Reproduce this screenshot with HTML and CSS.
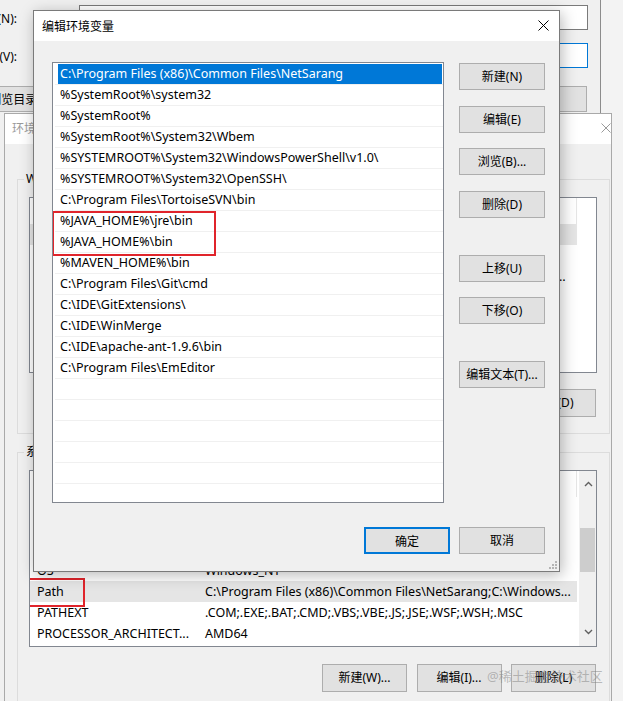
FILE: index.html
```html
<!DOCTYPE html>
<html lang="zh-CN">
<head>
<meta charset="utf-8">
<title>编辑环境变量</title>
<link rel="stylesheet" href="styles.css">
</head>
<body>
<div class="desktop">

  <!-- 编辑系统变量 -->
  <section class="win win-var">
    <div class="var-form">
      <label class="var-label">变量名(N):</label>
      <div class="textbox"></div>
      <label class="var-label">变量值(V):</label>
      <div class="textbox focus"></div>
      <div class="var-actions">
        <div class="btn-group">
          <button class="btn">浏览目录(D)...</button>
          <button class="btn">浏览文件(F)...</button>
        </div>
        <div class="btn-group">
          <button class="btn">确定</button>
          <button class="btn">取消</button>
        </div>
      </div>
    </div>
  </section>

  <!-- 环境变量 -->
  <section class="win win-env">
    <header class="tbar tbar-env">
      <span>环境变量</span>
      <svg class="x-icon" width="10" height="10" viewBox="0 0 10 10"><path d="M0.5 0.5L9.5 9.5M9.5 0.5L0.5 9.5" stroke="#9a9a9a" stroke-width="1"/></svg>
    </header>
    <div class="env-body">
      <fieldset class="group">
        <legend>Windows 的用户变量(U)</legend>
        <div class="lv lv-user">
          <div class="lv-main">
            <div class="lv-head"><span class="c-name">变量</span><span class="c-val">值</span></div>
            <div class="lv-row sel"><span class="c-name">IntelliJ IDEA</span><span class="c-val">D:\IDEA\bin;</span></div>
            <div class="lv-row"><span class="c-name">OneDrive</span><span class="c-val">C:\Users\Admin\OneDrive</span></div>
            <div class="lv-row"><span class="c-name">Path</span><span class="c-val ell">C:\Users\Admin\AppData\Local\Microsoft\WindowsApps;D:\IDEA\bin;C:\Users\Admin\AppData\Local\Programs</span></div>
            <div class="lv-row"><span class="c-name">TEMP</span><span class="c-val">%USERPROFILE%\AppData\Local\Temp</span></div>
            <div class="lv-row"><span class="c-name">TMP</span><span class="c-val">%USERPROFILE%\AppData\Local\Temp</span></div>
          </div>
        </div>
        <div class="group-actions">
          <button class="btn">新建(N)...</button>
          <button class="btn">编辑(E)...</button>
          <button class="btn">删除(D)</button>
        </div>
      </fieldset>

      <fieldset class="group group-sys">
        <legend>系统变量(S)</legend>
        <div class="lv lv-sys">
          <div class="lv-main">
            <div class="lv-head"><span class="c-name">变量</span><span class="c-val">值</span></div>
            <div class="lv-row"><span class="c-name">JAVA_HOME</span><span class="c-val">C:\Program Files\Java\jdk1.8.0_201</span></div>
            <div class="lv-row"><span class="c-name">MAVEN_HOME</span><span class="c-val">C:\IDE\apache-maven-3.6.0</span></div>
            <div class="lv-row"><span class="c-name">NUMBER_OF_PROCESSORS</span><span class="c-val">8</span></div>
            <div class="lv-row"><span class="c-name">OS</span><span class="c-val">Windows_NT</span></div>
            <div class="lv-row sel path-row"><span class="c-name">Path</span><span class="c-val">C:\Program Files (x86)\Common Files\NetSarang;C:\Windows...</span></div>
            <div class="lv-row"><span class="c-name">PATHEXT</span><span class="c-val">.COM;.EXE;.BAT;.CMD;.VBS;.VBE;.JS;.JSE;.WSF;.WSH;.MSC</span></div>
            <div class="lv-row"><span class="c-name">PROCESSOR_ARCHITECT...</span><span class="c-val">AMD64</span></div>
          </div>
          <div class="vscroll">
            <div class="sb-btn sb-up"><svg width="9" height="6" viewBox="0 0 9 6"><path d="M1 5L4.5 1.5L8 5" fill="none" stroke="#606060" stroke-width="1.4"/></svg></div>
            <div class="sb-track"><div class="sb-thumb"></div></div>
            <div class="sb-btn sb-down"><svg width="9" height="6" viewBox="0 0 9 6"><path d="M1 1L4.5 4.5L8 1" fill="none" stroke="#606060" stroke-width="1.4"/></svg></div>
          </div>
        </div>
        <div class="group-actions">
          <button class="btn">新建(W)...</button>
          <button class="btn">编辑(I)...</button>
          <button class="btn">删除(L)</button>
        </div>
      </fieldset>
    </div>
  </section>

  <!-- 编辑环境变量 -->
  <section class="win win-edit">
    <header class="tbar">
      <span>编辑环境变量</span>
      <svg class="x-icon" width="11" height="11" viewBox="0 0 11 11"><path d="M0.5 0.5L10.5 10.5M10.5 0.5L0.5 10.5" stroke="#000" stroke-width="1"/></svg>
    </header>
    <div class="edit-body">
      <div class="pathlist">
        <div class="pl-row sel"><span class="pl-cell">C:\Program Files (x86)\Common Files\NetSarang</span></div>
        <div class="pl-row"><span class="pl-cell">%SystemRoot%\system32</span></div>
        <div class="pl-row"><span class="pl-cell">%SystemRoot%</span></div>
        <div class="pl-row"><span class="pl-cell">%SystemRoot%\System32\Wbem</span></div>
        <div class="pl-row"><span class="pl-cell">%SYSTEMROOT%\System32\WindowsPowerShell\v1.0\</span></div>
        <div class="pl-row"><span class="pl-cell">%SYSTEMROOT%\System32\OpenSSH\</span></div>
        <div class="pl-row"><span class="pl-cell">C:\Program Files\TortoiseSVN\bin</span></div>
        <div class="mark">
          <div class="pl-row"><span class="pl-cell">%JAVA_HOME%\jre\bin</span></div>
          <div class="pl-row"><span class="pl-cell">%JAVA_HOME%\bin</span></div>
        </div>
        <div class="pl-row"><span class="pl-cell">%MAVEN_HOME%\bin</span></div>
        <div class="pl-row"><span class="pl-cell">C:\Program Files\Git\cmd</span></div>
        <div class="pl-row"><span class="pl-cell">C:\IDE\GitExtensions\</span></div>
        <div class="pl-row"><span class="pl-cell">C:\IDE\WinMerge</span></div>
        <div class="pl-row"><span class="pl-cell">C:\IDE\apache-ant-1.9.6\bin</span></div>
        <div class="pl-row"><span class="pl-cell">C:\Program Files\EmEditor</span></div>
        <div class="pl-row"><span class="pl-cell"></span></div>
        <div class="pl-row"><span class="pl-cell"></span></div>
        <div class="pl-row"><span class="pl-cell"></span></div>
        <div class="pl-row"><span class="pl-cell"></span></div>
        <div class="pl-row"><span class="pl-cell"></span></div>
        <div class="pl-row"><span class="pl-cell"></span></div>
      </div>
      <div class="side">
        <button class="btn">新建(N)</button>
        <button class="btn">编辑(E)</button>
        <button class="btn">浏览(B)...</button>
        <button class="btn">删除(D)</button>
        <button class="btn far">上移(U)</button>
        <button class="btn">下移(O)</button>
        <button class="btn far">编辑文本(T)...</button>
      </div>
      <div class="edit-foot">
        <button class="btn default">确定</button>
        <button class="btn">取消</button>
      </div>
    </div>
    <svg class="grip" width="9" height="9" viewBox="0 0 9 9">
      <g fill="#b4b4b4">
        <rect x="7" y="1" width="2" height="2"/>
        <rect x="4" y="4" width="2" height="2"/><rect x="7" y="4" width="2" height="2"/>
        <rect x="1" y="7" width="2" height="2"/><rect x="4" y="7" width="2" height="2"/><rect x="7" y="7" width="2" height="2"/>
      </g>
    </svg>
  </section>

  <div class="watermark">@稀土掘金技术社区</div>
</div>
</body>
</html>
```

FILE: styles.css
```css
* { box-sizing: border-box; }

html, body { margin: 0; padding: 0; }

body {
  width: 623px;
  height: 701px;
  overflow: hidden;
  background: #f3f3f3;
  font-family: "Noto Sans", "Noto Sans CJK SC", sans-serif;
  font-size: 12px;
  color: #000;
}

.desktop {
  position: relative;
  width: 623px;
  height: 701px;
  overflow: hidden;
}

/* windows stacked on the desktop */
.win {
  position: absolute;
  background: #f0f0f0;
}

/* ---------- buttons ---------- */
.btn {
  font: inherit;
  font-size: 12px;
  color: #000;
  background: #e1e1e1;
  border: 1px solid #adadad;
  height: 27px;
  width: 86px;
  padding: 0;
  margin: 0;
  white-space: nowrap;
  line-height: 25px;
}
.btn.default { border: 2px solid #0078d7; }

/* ---------- 编辑系统变量 ---------- */
.win-var {
  left: -130px;
  top: -30px;
  width: 731px;
  height: 780px;
  border-right: 1px solid #8c8c8c;
}
.var-form {
  display: grid;
  grid-template-columns: 209px 509px;
  row-gap: 13px;
  padding-top: 35px;
  align-items: center;
}
.var-label {
  text-align: right;
  padding-right: 62px;
  white-space: nowrap;
}
.textbox {
  height: 25px;
  background: #fff;
  border: 1px solid #7a7a7a;
}
.textbox.focus { border-color: #0078d7; }
.var-actions {
  grid-column: 1 / -1;
  display: flex;
  justify-content: space-between;
  padding-left: 113px;
  padding-right: 1px;
  margin-top: 5px;
}
.var-actions .btn { height: 26px; }
.btn-group { display: flex; gap: 9px; }

/* ---------- title bars ---------- */
.tbar {
  height: 30px;
  background: #fff;
  display: flex;
  align-items: center;
  justify-content: space-between;
  padding: 0 10px 1px 8px;
  font-size: 12px;
}
.x-icon { display: block; }

/* ---------- 环境变量 ---------- */
.win-env {
  left: 4px;
  top: 113px;
  width: 608px;
  height: 640px;
  border: 1px solid #a9a9a9;
}
.tbar-env {
  color: #9a9a9a;
  padding: 0 0 2px 7px;
}
.env-body {
  padding: 27px 1px 0 12px;
}
.group {
  margin: 0;
  min-width: 0;
  border: 1px solid #dcdcdc;
  padding: 10px 12px 16px 11px;
}
.group legend {
  font-size: 12px;
  line-height: 16px;
  padding: 0 2px;
  margin-left: -5px;
  white-space: nowrap;
}
.group-sys { margin-top: 10px; }

.group-actions {
  display: flex;
  justify-content: flex-end;
  gap: 9.5px;
  margin-top: 16px;
  padding-right: 1px;
}
.group-actions .btn { width: 85px; height: 28px; line-height: 26px; }
.group-sys .group-actions { margin-top: 17px; }

/* list views */
.lv {
  display: flex;
  background: #fff;
  border: 1px solid #828790;
  overflow: hidden;
}
.lv-user { height: 176px; }
.lv-sys { height: 177px; }
.lv-main { flex: 1; min-width: 0; }
.lv-head {
  display: flex;
  height: 26px;
  line-height: 25px;
}
.lv-head .c-name,
.lv-head .c-val { border-right: 1px solid #e5e5e5; }
.lv-row {
  display: flex;
  height: 21px;
  line-height: 21px;
  white-space: nowrap;
  font-size: 12.5px;
}
.c-name {
  flex: none;
  width: 167px;
  padding-left: 7px;
  overflow: hidden;
}
.c-val {
  flex: none;
  width: 380px;
  padding-left: 8px;
  overflow: hidden;
}
.c-val.ell {
  padding-right: 10px;
  text-overflow: ellipsis;
}
.lv-row.sel .c-name,
.lv-row.sel .c-val { background: #e5e5e5; }
.path-row { position: relative; }
.path-row::after {
  content: "";
  position: absolute;
  left: -3px;
  top: -3px;
  width: 54px;
  height: 25px;
  border: 2px solid #e0242b;
}

.vscroll {
  flex: none;
  width: 17px;
  display: flex;
  flex-direction: column;
  background: #f0f0f0;
  border-left: 1px solid #f0f0f0;
}
.sb-btn {
  height: 22px;
  display: flex;
  align-items: center;
  justify-content: center;
}
.sb-up { padding-top: 3px; }
.sb-track { flex: 1; padding-top: 35px; }
.sb-thumb {
  width: 15px;
  height: 44px;
  background: #cdcdcd;
}
.sb-down { height: 24px; padding-bottom: 4px; }

/* ---------- 编辑环境变量 ---------- */
.win-edit {
  left: 33px;
  top: 10px;
  width: 527px;
  border: 1px solid #7a7a7a;
  box-shadow: 2px 3px 14px rgba(0, 0, 0, 0.28);
}
.edit-body {
  display: grid;
  grid-template-columns: 392px 86px;
  column-gap: 15px;
  padding: 21px 14px 17px 18px;
}
.pathlist {
  height: 441px;
  background: #fff;
  border: 1px solid #828790;
  padding: 1px 0 0 2px;
  overflow: hidden;
  font-size: 12.5px;
}
.pl-row {
  height: 21px;
  border-bottom: 1px solid #f0f0f0;
  padding-left: 3px;
  padding-right: 1px;
}
.pl-cell {
  display: block;
  height: 20px;
  line-height: 20px;
  padding-left: 2px;
  white-space: nowrap;
}
.pl-row.sel .pl-cell {
  background: #0078d7;
  color: #fff;
}
.mark { position: relative; }
.mark::after {
  content: "";
  position: absolute;
  left: -3px;
  top: 0;
  width: 160px;
  height: 41px;
  border: 2px solid #e0242b;
}

.side {
  display: flex;
  flex-direction: column;
  gap: 15.5px;
  padding-top: 1px;
}
.side .far { margin-top: 21.5px; }

.edit-foot {
  grid-column: 1 / -1;
  display: flex;
  justify-content: flex-end;
  gap: 9px;
  margin-top: 24px;
}

.grip {
  position: absolute;
  right: 2px;
  bottom: 2px;
}

/* site watermark over the screenshot */
.watermark {
  position: absolute;
  left: 487px;
  top: 666px;
  font-size: 13px;
  line-height: 20px;
  color: rgba(130, 130, 130, 0.5);
  white-space: nowrap;
}
```
